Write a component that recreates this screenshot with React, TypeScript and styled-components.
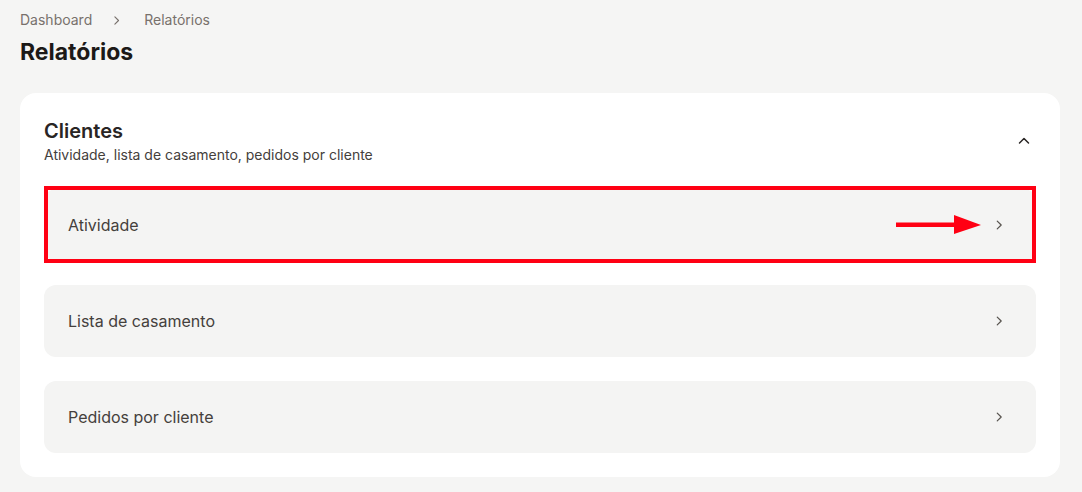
import React from 'react';
import styled, { createGlobalStyle } from 'styled-components';

const GlobalStyle = createGlobalStyle`
  html, body {
    margin: 0;
    padding: 0;
    background: #f5f5f4;
    font-family: Inter, 'Noto Sans', sans-serif;
    color: #1c1917;
  }
`;

interface ReportLink {
  label: string;
  highlighted?: boolean;
}

const links: ReportLink[] = [
  { label: 'Atividade', highlighted: true },
  { label: 'Lista de casamento' },
  { label: 'Pedidos por cliente' },
];

const ChevronRight = ({ size = 14 }: { size?: number }) => (
  <svg width={size} height={size} viewBox="0 0 16 16" fill="none">
    <path d="M6 3.5 L10.5 8 L6 12.5" stroke="currentColor" strokeWidth="1.4" strokeLinecap="round" strokeLinejoin="round" />
  </svg>
);

const ChevronUp = () => (
  <svg width="16" height="16" viewBox="0 0 16 16" fill="none">
    <path d="M3.5 10 L8 5.5 L12.5 10" stroke="currentColor" strokeWidth="1.5" strokeLinecap="round" strokeLinejoin="round" />
  </svg>
);

const RedArrow = () => (
  <svg width="86" height="22" viewBox="0 0 86 22">
    <rect x="0" y="8.5" width="62" height="4.5" fill="#ff0013" />
    <polygon points="58,1 85,11 58,20" fill="#ff0013" />
  </svg>
);

export default function App() {
  return (
    <>
      <GlobalStyle />
      <Page>
        <Breadcrumb>
          <Crumb>Dashboard</Crumb>
          <CrumbSep>
            <ChevronRight size={13} />
          </CrumbSep>
          <Crumb>Relatórios</Crumb>
        </Breadcrumb>
        <PageTitle>Relatórios</PageTitle>

        <Card>
          <CardHeader>
            <div>
              <CardTitle>Clientes</CardTitle>
              <CardSubtitle>Atividade, lista de casamento, pedidos por cliente</CardSubtitle>
            </div>
            <Toggle>
              <ChevronUp />
            </Toggle>
          </CardHeader>

          <LinkList>
            {links.map((link) => (
              <LinkRow key={link.label}>
                <LinkLabel>{link.label}</LinkLabel>
                <RowEnd>
                  {link.highlighted && <RedArrow />}
                  <RowChevron>
                    <ChevronRight />
                  </RowChevron>
                </RowEnd>
                {link.highlighted && <Highlight />}
              </LinkRow>
            ))}
          </LinkList>
        </Card>
      </Page>
    </>
  );
}

// ===== Styles =====

const Page = styled.div`
  padding: 10px 22px 16px 20px;
  display: flex;
  flex-direction: column;
`;

const Breadcrumb = styled.nav`
  display: flex;
  align-items: center;
  height: 20px;
  font-size: 14px;
  color: #78716c;
`;

const Crumb = styled.span`
  line-height: 20px;
`;

const CrumbSep = styled.span`
  display: flex;
  align-items: center;
  margin: 0 21px 0 18px;
  color: #78716c;
`;

const PageTitle = styled.h1`
  margin: 6px 0 25px;
  font-size: 23px;
  line-height: 32px;
  font-weight: 700;
  color: #1c1917;
`;

const Card = styled.section`
  background: #ffffff;
  border-radius: 16px;
  padding: 24px 24px 24px;
  display: flex;
  flex-direction: column;
  gap: 24px;
`;

const CardHeader = styled.div`
  display: flex;
  justify-content: space-between;
  align-items: center;
`;

const CardTitle = styled.h2`
  margin: 0;
  font-size: 20px;
  line-height: 28px;
  font-weight: 600;
  color: #292524;
`;

const CardSubtitle = styled.p`
  margin: 0;
  font-size: 14px;
  line-height: 20px;
  color: #44403c;
`;

const Toggle = styled.button`
  border: none;
  background: transparent;
  padding: 0;
  margin-right: 4px;
  display: flex;
  color: #292524;
  cursor: pointer;
`;

const LinkList = styled.div`
  display: flex;
  flex-direction: column;
  gap: 24px;
`;

const LinkRow = styled.a`
  position: relative;
  height: 72px;
  padding: 0 24px;
  border-radius: 12px;
  background: #f4f4f3;
  display: flex;
  align-items: center;
  justify-content: space-between;
  cursor: pointer;
`;

const LinkLabel = styled.span`
  font-size: 16px;
  line-height: 24px;
  color: #44403c;
`;

const RowEnd = styled.div`
  display: flex;
  align-items: center;
  gap: 10px;
  margin-right: 6px;
`;

const RowChevron = styled.span`
  display: flex;
  color: #57534e;
`;

const Highlight = styled.span`
  position: absolute;
  top: -3px;
  bottom: -2px;
  left: 0;
  right: 0;
  border: 4px solid #ff0013;
  pointer-events: none;
`;
